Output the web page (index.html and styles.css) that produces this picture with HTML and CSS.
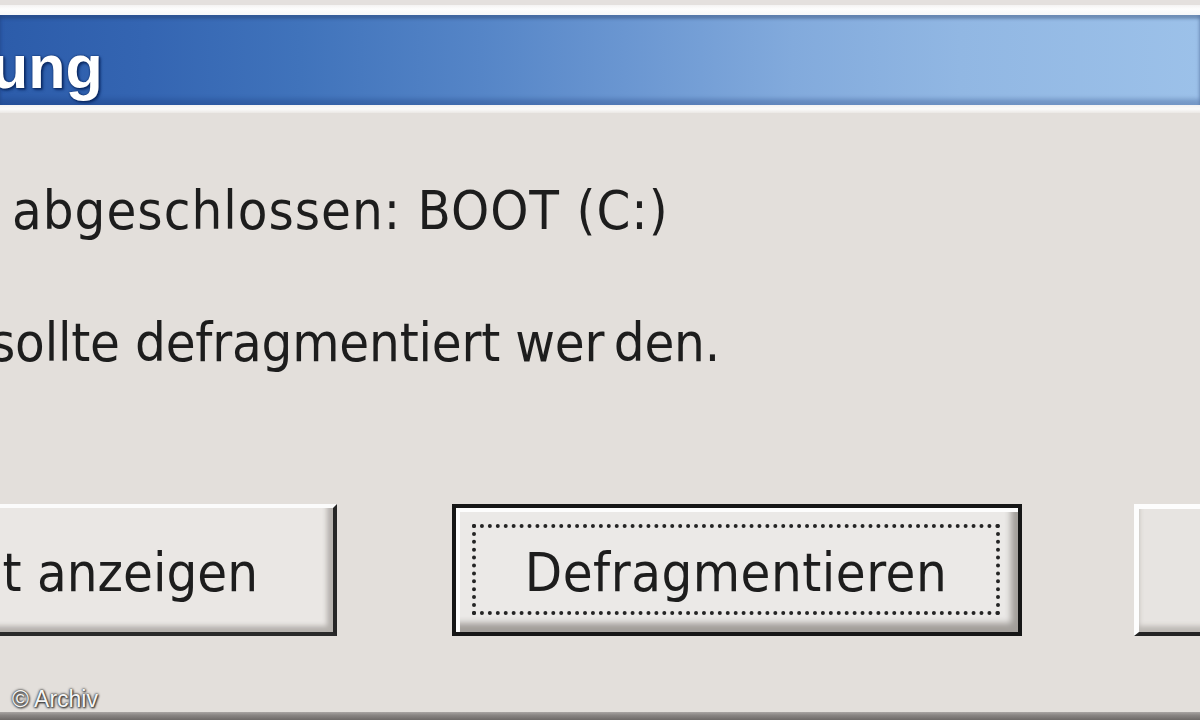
FILE: index.html
```html
<!DOCTYPE html>
<html lang="de">
<head>
<meta charset="utf-8">
<title>Defragmentierung</title>
<link rel="stylesheet" href="styles.css">
</head>
<body>
<div class="frame">
  <div class="strip-top"></div>
  <div class="hl-top"></div>
  <div class="titlebar"><span class="title">ung</span></div>
  <div class="hl-bottom"></div>
  <div class="content">
    <p class="msg msg1">abgeschlossen: BOOT (C:)</p>
    <p class="msg msg2">sollte defragmentiert wer<span class="tight"> </span>den.</p>
    <div class="buttons">
      <div class="btn btn-left"><span class="btn-label">t anzeigen</span></div>
      <div class="btn btn-default"><div class="focus"><span class="btn-label wide">Defragmentieren</span></div></div>
      <div class="btn btn-right"></div>
    </div>
    <div class="credit">© Archiv</div>
  </div>
  <div class="strip-bottom"></div>
</div>
</body>
</html>
```

FILE: styles.css
```css
html, body {
  margin: 0;
  padding: 0;
}
body {
  width: 1200px;
  height: 720px;
  overflow: hidden;
  background: #e3dfdb;
  font-family: "DejaVu Sans Condensed", "DejaVu Sans", sans-serif;
  font-stretch: semi-condensed;
}
.frame {
  display: flex;
  flex-direction: column;
  height: 720px;
}
.strip-top {
  height: 5px;
  background: #e4e0de;
}
.hl-top {
  height: 10px;
  background: linear-gradient(to bottom, #f4f3f3, #fdfdfd 40%, #f6f7f8);
}
.titlebar {
  height: 90px;
  box-sizing: border-box;
  padding-top: 17px;
  background: linear-gradient(to right, #2c5caa 0%, #3465b2 12%, #4073bb 25%, #5585c7 40%, #6a96d1 52%, #82aadc 66%, #91b7e3 80%, #9cc1e9 100%);
  box-shadow: inset 0 4px 3px rgba(30, 50, 90, 0.35), inset 0 -6px 4px rgba(20, 50, 110, 0.28);
  overflow: hidden;
}
.title {
  display: block;
  font-family: "Liberation Sans", Arial, sans-serif;
  font-stretch: normal;
  font-weight: bold;
  font-size: 61px;
  line-height: 70px;
  color: #ffffff;
  text-indent: -9px;
  text-shadow: 0 0 2px #0c2a63, 1px 1px 2px #0c2a63, 2px 2px 3px #143878;
}
.hl-bottom {
  height: 8px;
  background: linear-gradient(to bottom, #f3f2f2, #fbfbfa 50%, #ebe8e5);
}
.content {
  flex: 1;
  padding-left: 12px;
  display: flex;
  flex-direction: column;
  overflow: hidden;
}
.msg {
  margin: 0;
  font-size: 54px;
  line-height: 64px;
  color: #1d1d1d;
  white-space: nowrap;
}
.msg1 {
  margin-top: 66px;
  letter-spacing: 1px;
}
.msg2 {
  margin-top: 68px;
  text-indent: -22px;
  letter-spacing: -0.2px;
}
.tight {
  letter-spacing: -6px;
}
.buttons {
  display: flex;
  margin-top: 129px;
  margin-left: -72px;
  height: 132px;
}
.btn {
  box-sizing: border-box;
  height: 132px;
  flex: none;
  background: #eae7e4;
  display: flex;
  align-items: center;
}
.btn-label {
  font-size: 54px;
  line-height: 64px;
  color: #1d1d1d;
  white-space: nowrap;
  padding-top: 6px;
}
.btn-label.wide {
  letter-spacing: 0.5px;
}
.btn-left {
  width: 397px;
  border-top: 4px solid #fbfbfb;
  border-right: 4px solid #262626;
  border-bottom: 4px solid #2a2a2a;
  box-shadow: inset -6px -6px 5px #b5b1ad;
  justify-content: flex-end;
  padding-right: 75px;
}
.btn-default {
  width: 570px;
  margin-left: 115px;
  border: 4px solid #161616;
  padding: 16px 18px 17px 16px;
  background: #ebe9e7;
  box-shadow: inset 4px 4px 0 #fdfdfd, inset -7px -9px 6px #a29e9a;
  align-items: stretch;
}
.focus {
  flex: 1;
  border: 4px dotted #242424;
  display: flex;
  align-items: center;
  justify-content: center;
}
.btn-right {
  width: 200px;
  margin-left: 112px;
  border-left: 5px solid #fdfdfd;
  border-top: 5px solid #fdfdfd;
  border-bottom: 4px solid #242424;
  box-shadow: inset 0 -6px 5px #bdb9b5;
  background: #e7e4e1;
}
.credit {
  margin-top: 50px;
  font-family: "Liberation Sans", Arial, sans-serif;
  font-stretch: normal;
  font-size: 23px;
  line-height: 26px;
  color: #f6f6f6;
  text-shadow: 0 0 2px #2e2e2e, 0 0 3px #444444, 1px 1px 2px #2a2a2a;
}
.strip-bottom {
  height: 8px;
  background: linear-gradient(to bottom, #a9a5a3, #8a8684 40%, #6e6a68);
}
```
